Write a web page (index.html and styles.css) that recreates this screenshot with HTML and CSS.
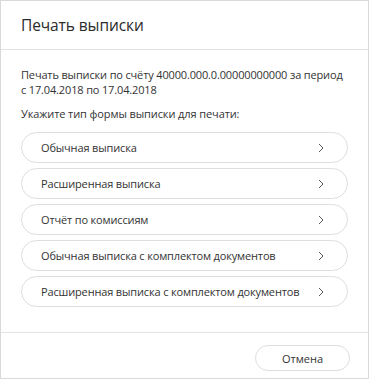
FILE: index.html
```html
<!DOCTYPE html>
<html lang="ru">
<head>
<meta charset="utf-8">
<title>Печать выписки</title>
<link rel="stylesheet" href="styles.css">
</head>
<body>
<div class="dialog">
  <div class="dialog-header">
    <h1 class="dialog-title">Печать выписки</h1>
  </div>
  <div class="dialog-body">
    <p class="desc">Печать выписки по счёту 40000.000.0.00000000000 за период с 17.04.2018 по 17.04.2018</p>
    <p class="prompt">Укажите тип формы выписки для печати:</p>
    <div class="options">
      <button class="option"><span>Обычная выписка</span><svg class="chev" viewBox="0 0 6 10" width="6" height="10"><path d="M1 1l4 4-4 4" fill="none" stroke="#555" stroke-width="1"/></svg></button>
      <button class="option"><span>Расширенная выписка</span><svg class="chev" viewBox="0 0 6 10" width="6" height="10"><path d="M1 1l4 4-4 4" fill="none" stroke="#555" stroke-width="1"/></svg></button>
      <button class="option"><span>Отчёт по комиссиям</span><svg class="chev" viewBox="0 0 6 10" width="6" height="10"><path d="M1 1l4 4-4 4" fill="none" stroke="#555" stroke-width="1"/></svg></button>
      <button class="option"><span>Обычная выписка с комплектом документов</span><svg class="chev" viewBox="0 0 6 10" width="6" height="10"><path d="M1 1l4 4-4 4" fill="none" stroke="#555" stroke-width="1"/></svg></button>
      <button class="option"><span>Расширенная выписка с комплектом документов</span><svg class="chev" viewBox="0 0 6 10" width="6" height="10"><path d="M1 1l4 4-4 4" fill="none" stroke="#555" stroke-width="1"/></svg></button>
    </div>
  </div>
  <div class="dialog-footer">
    <button class="cancel">Отмена</button>
  </div>
</div>
</body>
</html>
```
FILE: styles.css
```css
html, body {
  margin: 0;
  padding: 0;
  background: #ffffff;
}
body {
  font-family: "Open Sans", "Noto Sans", sans-serif;
  color: #333333;
}
.dialog {
  box-sizing: border-box;
  width: 369px;
  height: 379px;
  border: 1px solid #d9d9d9;
  background: #ffffff;
  display: flex;
  flex-direction: column;
}
.dialog-header {
  box-sizing: border-box;
  height: 49px;
  padding: 0 20px;
  border-bottom: 1px solid #e3e3e3;
  display: flex;
  align-items: center;
}
.dialog-title {
  margin: 0;
  font-size: 15.5px;
  font-weight: 400;
  letter-spacing: -0.1px;
  color: #2b2b2b;
  line-height: 20px;
}
.dialog-body {
  flex: 1;
  padding: 17px 20px 0 20px;
}
.desc {
  margin: 0 -2px 0 0;
  font-size: 11px;
  line-height: 15px;
  letter-spacing: -0.15px;
}
.prompt {
  margin: 9px 0 0 0;
  font-size: 11px;
  line-height: 15px;
  letter-spacing: -0.1px;
}
.options {
  margin-top: 11px;
  display: flex;
  flex-direction: column;
  gap: 5px;
}
.option {
  box-sizing: border-box;
  height: 31px;
  width: 100%;
  border: 1px solid #dedede;
  border-radius: 16px;
  background: #ffffff;
  padding: 0 23px 0 19px;
  display: flex;
  align-items: center;
  justify-content: space-between;
  font-family: inherit;
  font-size: 11px;
  letter-spacing: -0.15px;
  color: #333333;
  text-align: left;
}
.chev {
  display: block;
}
.dialog-footer {
  box-sizing: border-box;
  height: 46px;
  border-top: 1px solid #e3e3e3;
  padding: 12px 18px 0 0;
  display: flex;
  justify-content: flex-end;
  align-items: flex-start;
}
.cancel {
  box-sizing: border-box;
  width: 95px;
  height: 26px;
  border: 1px solid #dedede;
  border-radius: 13px;
  background: #ffffff;
  font-family: inherit;
  font-size: 11px;
  color: #333333;
}
```
